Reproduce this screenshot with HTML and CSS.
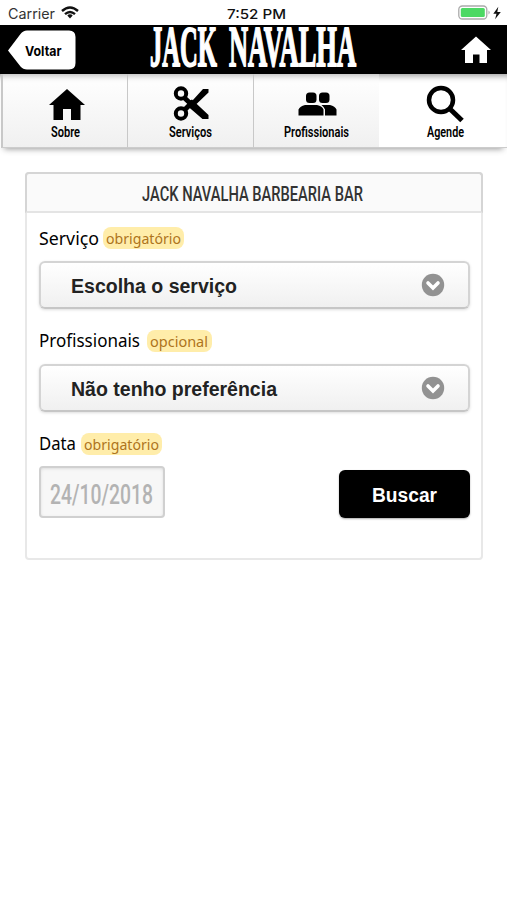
FILE: index.html
```html
<!DOCTYPE html>
<html lang="pt-BR">
<head>
<meta charset="utf-8">
<title>Jack Navalha</title>
<link rel="stylesheet" href="styles.css">
</head>
<body>
<div class="status">
  <div class="status-left">
    <svg class="carrier" width="47" height="25"><text x="0" y="18.5" textLength="47" lengthAdjust="spacingAndGlyphs">Carrier</text></svg>
    <svg width="18" height="13" viewBox="0 0 18 13"><g fill="none" stroke="#111" stroke-width="2.4"><path d="M1 5Q9-2.2 17 5"/><path d="M4 8.2Q9 3.800 14 8.200"/></g><path d="M9 8.300Q10.600 8.300 11.700 9.600L9 12.400L6.300 9.600Q7.400 8.300 9 8.300Z" fill="#111"/></svg>
  </div>
  <svg class="clock" width="59" height="25"><text x="0" y="18.5" textLength="59" lengthAdjust="spacingAndGlyphs">7:52 PM</text></svg>
  <svg class="battery" width="44" height="16" viewBox="0 0 44 16"><rect x=".8" y="1" width="28" height="13" rx="3.500" fill="#fff" stroke="#aaa" stroke-width="1.300"/><rect x="2.800" y="3" width="24" height="9" rx="1.500" fill="#4cd964"/><path d="M30.500 5.500Q33 7.500 30.500 9.500Z" fill="#aaa"/><path d="M40.300 1.800L35.300 8.800H38.500L37.100 14.200L42.800 7H39.300Z" fill="#111"/></svg>
</div>
<header class="bar">
  <svg class="back" width="68" height="40" viewBox="0 0 68 40"><path d="M0 20.500L12.500 4Q15 .5 19 .5H61Q67.500 .5 67.500 7V33Q67.500 39.500 61 39.500H19Q15 39.500 12.500 36.500Z" fill="#fff"/><text x="17" y="26" textLength="36.500" lengthAdjust="spacingAndGlyphs">Voltar</text></svg>
  <svg class="logo" width="207" height="49"><text x="0" y="41" textLength="67" lengthAdjust="spacingAndGlyphs">JACK</text><text x="79" y="41" textLength="127" lengthAdjust="spacingAndGlyphs">NAVALHA</text></svg>
  <svg class="home" width="30" height="28" viewBox="0 0 30 28"><path d="M15 .5L30 14H26V27H18.500V18.500H12V27H4V14H0Z" fill="#fff"/></svg>
</header>
<nav class="tabs">
  <a class="tab"><svg class="glyph shifted" width="36" height="40" viewBox="0 0 36 40"><path d="M18 4L36 20H31.500V35H22V24H14V35H4.500V20H0Z"/></svg><svg class="cap" width="29" height="20"><text y="16" textLength="29" lengthAdjust="spacingAndGlyphs">Sobre</text></svg></a>
  <a class="tab"><svg class="glyph" width="36" height="40" viewBox="0 0 36 40"><g fill="none" stroke="#000" stroke-width="4"><circle cx="8" cy="8.500" r="5.200"/><circle cx="8" cy="28.500" r="5.200"/><path d="M11 12.500L18 19M11.500 25L18 18.500" stroke-width="5"/></g><path d="M14 17L19 14.500L35.500 30V34H29.500L15 21.500ZM19.500 15.500L30 4H35.500V7.500L23.500 19Z"/></svg><svg class="cap" width="43" height="20"><text y="16" textLength="43" lengthAdjust="spacingAndGlyphs">Serviços</text></svg></a>
  <a class="tab"><svg class="glyph" width="40" height="40" viewBox="0 0 40 40"><rect x="9" y="7.500" width="10.500" height="10.500" rx="3.500"/><rect x="22" y="7.500" width="10.500" height="10.500" rx="3.500"/><path d="M1.500 30.500V24.500Q3 21 8 20H20Q25.500 21 26.500 24.500V30.500ZM24.500 20H33Q38 21 39.500 24.500V30.500H28V24.500Q27 22 24.500 20Z"/></svg><svg class="cap" width="65" height="20"><text y="16" textLength="65" lengthAdjust="spacingAndGlyphs">Profissionais</text></svg></a>
  <a class="tab active"><svg class="glyph" width="38" height="40" viewBox="0 0 38 40"><circle cx="15" cy="15" r="12" fill="none" stroke="#000" stroke-width="4.500"/><path d="M24 24L36 35.500" stroke="#000" stroke-width="5"/></svg><svg class="cap" width="37" height="20"><text y="16" textLength="37" lengthAdjust="spacingAndGlyphs">Agende</text></svg></a>
</nav>
<main class="card">
  <h1 class="card-title"><svg width="222" height="39"><text y="27.500" textLength="221" lengthAdjust="spacingAndGlyphs">JACK NAVALHA BARBEARIA BAR</text></svg></h1>
  <form class="form">
    <div class="label"><svg width="60" height="24"><text y="17.500" textLength="60" lengthAdjust="spacingAndGlyphs">Serviço</text></svg><span class="pill"><svg width="74" height="22"><text y="17" textLength="75" lengthAdjust="spacingAndGlyphs">obrigatório</text></svg></span></div>
    <div class="select"><svg width="166" height="46"><text y="31" textLength="166" lengthAdjust="spacingAndGlyphs">Escolha o serviço</text></svg><svg width="24" height="24" viewBox="0 0 24 24"><circle cx="12" cy="12" r="11.200" fill="#929292"/><path d="M7 10L12 15L17 10" fill="none" stroke="#fff" stroke-width="3.600" stroke-linecap="round"/></svg></div>
    <div class="label wide"><svg width="101" height="24"><text y="17" textLength="101" lengthAdjust="spacingAndGlyphs">Profissionais</text></svg><span class="pill"><svg width="58" height="22"><text y="17" textLength="58" lengthAdjust="spacingAndGlyphs">opcional</text></svg></span></div>
    <div class="select"><svg width="207" height="46"><text y="31" textLength="206" lengthAdjust="spacingAndGlyphs">Não tenho preferência</text></svg><svg width="24" height="24" viewBox="0 0 24 24"><circle cx="12" cy="12" r="11.200" fill="#929292"/><path d="M7 10L12 15L17 10" fill="none" stroke="#fff" stroke-width="3.600" stroke-linecap="round"/></svg></div>
    <div class="label"><svg width="38" height="24"><text y="16.500" textLength="37" lengthAdjust="spacingAndGlyphs">Data</text></svg><span class="pill"><svg width="74" height="22"><text y="17" textLength="75" lengthAdjust="spacingAndGlyphs">obrigatório</text></svg></span></div>
    <div class="row">
      <div class="date"><svg width="103" height="48"><text y="36" textLength="103" lengthAdjust="spacingAndGlyphs">24/10/2018</text></svg></div>
      <div class="submit"><svg width="66" height="48"><text y="32" textLength="65" lengthAdjust="spacingAndGlyphs">Buscar</text></svg></div>
    </div>
  </form>
</main>
</body>
</html>
```
FILE: styles.css
```css
* { box-sizing: border-box; }
body { margin: 0; background: #fff; font-family: "Liberation Sans", sans-serif; }
svg { display: block; overflow: visible; flex: none; }

.status { height: 25px; display: grid; grid-template-columns: 227px 59px 1fr; align-items: center; font-family: Inter, sans-serif; }
.status-left { display: flex; align-items: center; gap: 6px; padding-left: 8px; }
.carrier { font-size: 14px; fill: #333; }
.clock { font-size: 13.500px; font-weight: 500; fill: #111; }
.battery { justify-self: end; margin-right: 5px; }

.bar { height: 49px; background: #000; display: flex; align-items: center; padding: 0 16px 0 7.500px; }
.back { font: 700 13.500px Inter, sans-serif; }
.logo { margin-left: 74px; font: 700 57px "Liberation Serif", serif; fill: #fff; stroke: #fff; stroke-width: 1.800px; }
.home { margin-left: auto; }

.tabs { height: 74px; display: grid; grid-template-columns: 126px 126px 126px 1fr; padding-left: 1px; box-shadow: 0 5px 6px -4px #999, inset 0 7px 6px -5px #999; }
.tab { display: flex; flex-direction: column; align-items: center; padding-top: 11px; border-left: 1px solid #c8c8c8; border-bottom: 1px solid #ccc; background: linear-gradient(rgba(255,255,255,.3), #f0f0f0); }
.tab:first-child { border-left-width: 2px; }
.tab.active { background: none; border-left: 0; padding-left: 4px; }
.glyph { height: 40px; }
.shifted { margin-left: 4px; }
.cap { font: 600 14px Roboto, sans-serif; margin-top: -4px; }

.card { width: 458px; height: 388px; margin: 24px 0 0 25px; border: 2px solid #e8e8e8; border-radius: 4px; }
.card-title { margin: -2px; height: 41px; display: flex; justify-content: center; border: 2px solid #d5d5d5; border-bottom-color: #e4e4e4; border-radius: 4px 4px 0 0; background: #fafafa; font: 500 21px Roboto, sans-serif; fill: #333; }
.card-title svg { margin: -1px 2px 0 0; }
.form { padding: 16px 11px 0 12px; }
.label { height: 24px; display: flex; gap: 4px; font: 400 18px "Noto Sans", sans-serif; margin-bottom: 10px; }
.label.wide { gap: 7px; }
.pill { height: 22px; padding: 0 4px 0 3px; border-radius: 8px; background: #ffedaa; font-size: 15px; fill: #ae741c; }
.select { height: 48px; margin-bottom: 21px; display: flex; align-items: center; justify-content: space-between; padding: 0 23px 0 30px; border: 2px solid #d4d4d4; border-bottom-color: #c6c6c6; border-radius: 6px; background: linear-gradient(#fff, #f0f0f0); box-shadow: 0 1px 3px #ddd; font-size: 20px; font-weight: 700; fill: #222; }
.row { display: flex; justify-content: space-between; align-items: flex-end; margin-top: -1px; }
.date { width: 126px; height: 52px; padding-left: 9px; border: 2px solid #d0d0d0; border-radius: 4px; background: #f7f7f7; box-shadow: inset 0 1px 3px #ddd; font: 500 27px Roboto, sans-serif; fill: #b3b3b3; }
.submit { width: 131px; height: 48px; padding-left: 33px; border-radius: 6px; background: #000; box-shadow: 0 1px 2px #aaa; font-size: 20px; font-weight: 700; fill: #fff; }
```
